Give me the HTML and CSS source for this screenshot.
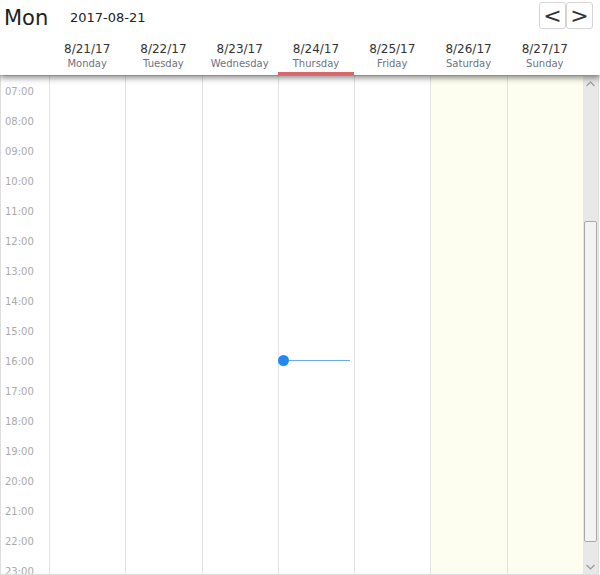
FILE: index.html
```html
<!DOCTYPE html>
<html>
<head>
<meta charset="utf-8">
<link rel="stylesheet" href="styles.css">
</head>
<body>
<div class="cal">
  <header class="head">
    <div class="toprow">
      <div class="title">Mon</div>
      <div class="date">2017-08-21</div>
      <div class="nav">
        <button class="btn">&lt;</button><button class="btn">&gt;</button>
      </div>
    </div>
    <div class="days">
      <div class="day"><span class="d">8/21/17</span><span class="w">Monday</span></div>
      <div class="day"><span class="d">8/22/17</span><span class="w">Tuesday</span></div>
      <div class="day"><span class="d">8/23/17</span><span class="w">Wednesday</span></div>
      <div class="day today"><span class="d">8/24/17</span><span class="w">Thursday</span></div>
      <div class="day"><span class="d">8/25/17</span><span class="w">Friday</span></div>
      <div class="day"><span class="d">8/26/17</span><span class="w">Saturday</span></div>
      <div class="day"><span class="d">8/27/17</span><span class="w">Sunday</span></div>
    </div>
  </header>
  <div class="body">
    <div class="grid">
      <div class="gutter">
        <div class="hr">07:00</div>
        <div class="hr">08:00</div><div class="hr">09:00</div><div class="hr">10:00</div><div class="hr">11:00</div>
        <div class="hr">12:00</div><div class="hr">13:00</div><div class="hr">14:00</div><div class="hr">15:00</div>
        <div class="hr">16:00</div><div class="hr">17:00</div><div class="hr">18:00</div><div class="hr">19:00</div>
        <div class="hr">20:00</div><div class="hr">21:00</div><div class="hr">22:00</div><div class="hr">23:00</div>
      </div>
      <div class="col"></div>
      <div class="col"></div>
      <div class="col"></div>
      <div class="col col-today"><div class="now"><span class="dot"></span><span class="line"></span></div></div>
      <div class="col"></div>
      <div class="col weekend"></div>
      <div class="col weekend"></div>
    </div>
    <div class="sbar">
      <div class="sarrow">
        <svg width="9" height="6" viewBox="0 0 9 6"><path d="M0.5 5 L4.5 1 L8.5 5" fill="none" stroke="#9a9a9a" stroke-width="1.2"/></svg>
      </div>
      <div class="strack"><div class="sthumb"></div></div>
      <div class="sarrow">
        <svg width="9" height="6" viewBox="0 0 9 6"><path d="M0.5 1 L4.5 5 L8.5 1" fill="none" stroke="#9a9a9a" stroke-width="1.2"/></svg>
      </div>
    </div>
  </div>
</div>
</body>
</html>
```
FILE: styles.css
```css
* { box-sizing: border-box; }
html, body { margin: 0; padding: 0; background: #fff; }
body { font-family: "DejaVu Sans", Verdana, sans-serif; color: #333; }
.cal { width: 600px; height: 575px; display: flex; flex-direction: column; overflow: hidden; }
.head { height: 75px; flex: none; position: relative; z-index: 2; background: #fff; box-shadow: 0 3px 6px rgba(0,0,0,0.45); display: flex; flex-direction: column; }
.toprow { height: 38px; display: flex; align-items: flex-start; padding: 3px 7px 0 4px; }
.title { font-size: 21px; line-height: 31px; color: #222; width: 66px; }
.date { font-size: 13px; line-height: 30px; color: #222; }
.nav { margin-left: auto; margin-top: -1px; display: flex; }
.btn { width: 27px; height: 27px; padding: 0; margin: 0; border: 1px solid #d4d4d4; border-radius: 3px; background: #fff; font-family: "DejaVu Sans", sans-serif; font-size: 22px; line-height: 22px; color: #333; display: flex; align-items: center; justify-content: center; }
.days { flex: 1; display: flex; padding-left: 49px; padding-right: 17px; }
.day { flex: 1; display: flex; flex-direction: column; align-items: center; padding-top: 4px; border-bottom: 3px solid transparent; }
.day.today { border-bottom-color: #d9666b; }
.d { font-size: 12px; line-height: 15px; color: #333; }
.w { font-size: 10px; line-height: 14px; color: #6e7280; }
.body { flex: 1; min-height: 0; width: 599px; display: flex; border: 1px solid #dedede; position: relative; z-index: 1; }
.grid { flex: 1; display: flex; overflow: hidden; }
.gutter { width: 48px; flex: none; padding-top: 1px; }
.hr { height: 30px; line-height: 30px; font-size: 10px; color: #aaa; padding-left: 4px; }
.col { flex: 1; border-left: 1px solid #e2e2e2; position: relative; }
.weekend { background: #fdfdf0; }
.now { position: absolute; left: 0; right: 4px; top: 279px; height: 11px; display: flex; align-items: center; }
.dot { width: 11px; height: 11px; border-radius: 50%; background: #2389f0; flex: none; margin-left: -1px; }
.line { flex: 1; height: 1.5px; background: #6aaaf0; }
.sbar { width: 15px; flex: none; background: #e8e8e8; display: flex; flex-direction: column; }
.sarrow { height: 15px; flex: none; display: flex; align-items: center; justify-content: center; }
.strack { flex: 1; padding: 130px 1px 0 1px; }
.sthumb { height: 321px; background: #f3f3f3; border: 1px solid #a8a8a8; border-radius: 2px; }
```
